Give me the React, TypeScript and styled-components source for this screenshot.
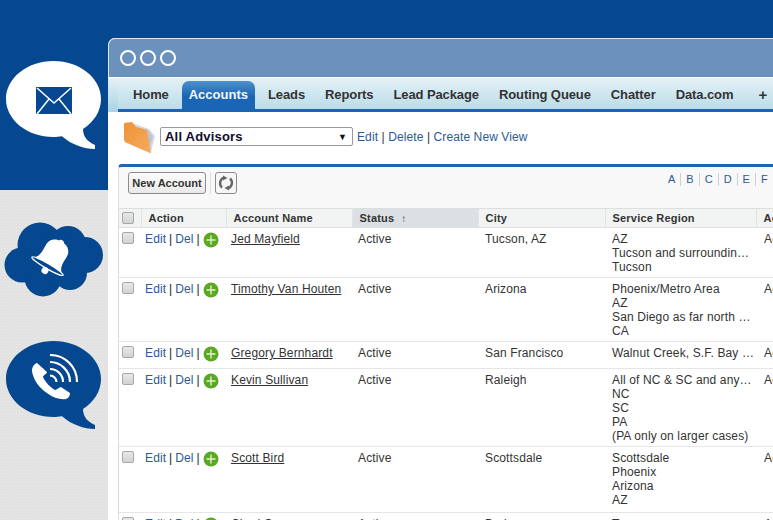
import React from "react";
import styled, { createGlobalStyle } from "styled-components";

const Global = createGlobalStyle`
  html, body { margin: 0; padding: 0; background: #05488f; }
  body { font-family: "Liberation Sans", Arial, sans-serif; font-size: 12px; color: #333; }
  * { box-sizing: border-box; }
`;

const Page = styled.div`
  width: 773px; height: 520px; overflow: hidden;
  display: grid; grid-template-columns: 108px 1fr;
  background: #05488f;
`;
const Side = styled.aside`display: flex; flex-direction: column; height: 520px;`;
const SideTop = styled.div`height: 190px; background: #05488f; padding: 61px 0 0 6px;`;
const SideBottom = styled.div`
  flex: 1; padding: 32px 0 0 4px;
  background-color: #e3e3e3;
  background-image:
    radial-gradient(rgba(255,255,255,.22) .6px, transparent .8px),
    radial-gradient(rgba(0,0,0,.02) .6px, transparent .8px);
  background-size: 3px 3px, 4px 4px;
  display: flex; flex-direction: column; gap: 44px;
`;
const SideIcon = styled.svg<{ $shift?: number }>`display: block; margin-left: ${p => p.$shift ?? 0}px;`;

const Main = styled.main`padding-top: 38px; min-width: 0;`;
const Win = styled.div`
  height: 482px; background: #fff; border-radius: 7px 0 0 0; overflow: hidden;
  display: flex; flex-direction: column;
`;
const TitleBar = styled.div`
  height: 39px; flex: none; background: #6b91bd;
  border-top: 1px solid #dfe8f2; border-left: 1px solid #dfe8f2; border-radius: 7px 0 0 0;
  display: flex; align-items: center; gap: 4px; padding: 0 0 0 11px;
`;
const Dot = styled.span`width: 16px; height: 16px; border-radius: 50%; border: 2px solid #fff;`;
const NavWrap = styled.div`
  flex: none; height: 34px; margin-top: 1px; padding: 2px 0 0 10px;
  background: linear-gradient(#e4f1f6, #a9d2e2);
`;
const Nav = styled.nav`
  height: 32px; display: flex; align-items: stretch; padding: 1px 0 0 5px;
  background: linear-gradient(#e2f0f5, #d2e8f0 40%, #bcdcea);
  border-bottom: 3px solid #1b66b4; border-radius: 7px 0 0 0;
  white-space: nowrap;
`;
const Tab = styled.a<{ $active?: boolean }>`
  flex: none; display: flex; align-items: center;
  padding: 0 ${p => (p.$active ? 7 : 10)}px 1px;
  margin: 0 ${p => (p.$active ? 3 : 0)}px;
  font-size: 13px; font-weight: bold; letter-spacing: ${p => (p.$active ? 0 : -0.1)}px;
  color: ${p => (p.$active ? "#f4f8fc" : "#333")};
  border-radius: 7px 7px 0 0;
  background: ${p => (p.$active ? "linear-gradient(#4f8fcb, #1b66b4 55%)" : "transparent")};
`;
const PlusTab = styled(Tab)`margin-left: 5px; font-size: 15px;`;
const Body = styled.div`flex: 1; padding-left: 10px; min-height: 0; background: #fff;`;
const Views = styled.div`height: 52px; display: flex; align-items: center; gap: 5px; padding: 0 0 3px 5px;`;
const Folder = styled.svg`flex: none; margin-top: 2px;`;
const Select = styled.div`
  width: 193px; height: 19px; border: 1px solid #9a9a9a; border-radius: 2px;
  display: flex; align-items: center; justify-content: space-between;
  padding: 0 5px 0 4px; font-size: 13px; font-weight: bold; color: #120c2c; letter-spacing: .2px;
`;
const Arrow = styled.span`font-size: 9px; color: #111;`;
const LinkRow = styled.div`font-size: 12px; color: #333; margin-left: -1px; letter-spacing: .1px;`;
const Lnk = styled.a`color: #2c5a94;`;

const Panel = styled.section`
  border-top: 3px solid #1b66b4; border-left: 1px solid #dcdcdc; border-radius: 4px 0 0 0;
  background: #f8f8f8; height: 400px; overflow: hidden;
`;
const Toolbar = styled.div`
  height: 41px; display: flex; align-items: flex-start; padding: 5px 0 0 9px; position: relative;
`;
const Btn = styled.button`
  width: 78px; height: 22px; padding: 0; background: linear-gradient(#fbfbfb, #eaeaea);
  border: 1px solid #8c8c8c; border-radius: 3px;
  font: bold 11px "Liberation Sans", Arial, sans-serif; color: #333;
`;
const Sep = styled.span`width: 1px; height: 22px; background: #dcdcdc; margin: 0 4px;`;
const IconBtn = styled.button`
  width: 22px; height: 22px; padding: 0; background: #f6f6f6;
  border: 1px solid #8c8c8c; border-radius: 3px; display: flex; align-items: center; justify-content: center;
`;
const Alpha = styled.div`
  position: absolute; top: 6px; left: 549px; display: flex; font-size: 11px; white-space: nowrap; color: #2c5a94;
`;
const Letter = styled.span`
  padding: 0 5px; border-right: 1px solid #cfcfcf; line-height: 13px;
  &:first-child { padding-left: 0; }
`;

const Table = styled.table`
  table-layout: fixed; width: 660px; border-collapse: collapse; background: #fff; font-size: 12px;
`;
const Th = styled.th<{ $sorted?: boolean }>`
  height: 19px; padding: 0 0 1px 7px; text-align: left; font-size: 11px; font-weight: bold; color: #333; letter-spacing: .2px;
  background: ${p => (p.$sorted ? "#dbe0e4" : "#f2f3f3")};
  border-top: 1px solid #dedede; border-bottom: 1px solid #dedede; border-right: 1px solid #e2e2e2;
  white-space: nowrap; overflow: hidden;
`;
const CheckTh = styled(Th)`padding: 0;`;
const SortArrow = styled.span`font-size: 10px; margin-left: 7px; font-weight: bold;`;
const Tr = styled.tr<{ $h: number }>`height: ${p => p.$h}px;`;
const Td = styled.td<{ $pad?: number }>`
  padding: 4px 0 0 ${p => p.$pad ?? 5}px; vertical-align: top; line-height: 14px; color: #333; letter-spacing: .13px;
  border-bottom: 1px solid #e6e6e6; white-space: nowrap; overflow: hidden;
`;
const CheckTd = styled(Td)`padding: 4px 0 0 3px;`;
const Check = styled.span`
  display: block; width: 12px; height: 12px; border: 1px solid #a8a8a8; border-radius: 2px;
  background: linear-gradient(#e8e8e8, #d2d2d2);
`;
const HeadCheck = styled(Check)`margin-left: 3px;`;
const Act = styled.div`display: flex; align-items: flex-start; gap: 3px;`;
const ActLinks = styled.span`word-spacing: -.6px;`;
const Bar = styled.span`color: #222;`;
const Plus = styled.svg`display: block;`;
const Name = styled.a`color: #333; text-decoration: underline;`;
const Line = styled.div``;

const rows = [
  { h: 50, name: "Jed Mayfield", city: "Tucson, AZ", region: ["AZ", "Tucson and surroundin…", "Tucson"] },
  { h: 64, name: "Timothy Van Houten", city: "Arizona", region: ["Phoenix/Metro Area", "AZ", "San Diego as far north …", "CA"] },
  { h: 27, name: "Gregory Bernhardt", city: "San Francisco", region: ["Walnut Creek, S.F. Bay …"] },
  { h: 78, name: "Kevin Sullivan", city: "Raleigh", region: ["All of NC & SC and any…", "NC", "SC", "PA", "(PA only on larger cases)"] },
  { h: 66, name: "Scott Bird", city: "Scottsdale", region: ["Scottsdale", "Phoenix", "Arizona", "AZ"] },
  { h: 27, name: "Chad Owen", city: "Buda", region: ["Texas"] },
];
const tabs: [string, boolean?][] = [
  ["Home"], ["Accounts", true], ["Leads"], ["Reports"], ["Lead Package"],
  ["Routing Queue"], ["Chatter"], ["Data.com"],
];

const blue = "#05488f";
const bubble = "M47.5 0C73.7 0 95 17 95 38C95 50 88 61 77 68C77 76 82 81 89 84L89 88C78 88 66 84 56 75.3C53 75.8 50 76 47.5 76C21.3 76 0 59 0 38C0 17 21.3 0 47.5 0Z";

export default function App() {
  return (
    <Page>
      <Global />
      <Side>
        <SideTop>
          <SideIcon width="95" height="89" viewBox="0 0 95 89">
            <path d={bubble} fill="#fff" />
            <rect x="30" y="26" width="36" height="27" fill={blue} />
            <path d="M31 27L48 42L65 27M31 53L43 38M65 53L53 38" stroke="#fff" strokeWidth="1.5" fill="none" />
          </SideIcon>
        </SideTop>
        <SideBottom>
          <SideIcon width="99" height="75" viewBox="0 0 99 75">
            <g fill={blue}>
              <circle cx="36" cy="23" r="22.5" /><circle cx="64" cy="22" r="18" /><circle cx="81" cy="33" r="18" />
              <circle cx="18" cy="43" r="17.5" /><circle cx="39" cy="56" r="18.5" /><circle cx="66" cy="51" r="17" />
              <circle cx="50" cy="38" r="26" />
            </g>
            <g transform="translate(50.5 32) rotate(30)">
              <path d="M-15 12C-11 8-12 2-12-4C-12-11-6-14-3-14C-2-16.500 2-16.500 3-14C6-14 12-11 12-4C12 2 11 8 15 12Z" fill="#fff" />
              <ellipse cx="0" cy="14" rx="18" ry="2.600" fill={blue} stroke="#fff" strokeWidth="1.300" />
              <circle cx="0" cy="19" r="3.500" fill="#fff" />
            </g>
          </SideIcon>
          <SideIcon $shift={2} width="95" height="89" viewBox="0 0 95 89">
            <path d={bubble} fill={blue} />
            <path d="M31 22C28 23 26 26 26 30C27 38 33 47 41 52C47 57 55 59 60 58C63 57 64 54 64 52L55 46C53 46 51 49 49 49C45 47 39 41 37 36C37 34 41 33 41 31Z" fill="#fff" />
            <g fill="none" stroke="#fff" strokeWidth="2.200">
              <path d="M44 14A26.700 26.700 0 0 1 71 41" />
              <path d="M44 21A20 20 0 0 1 64 41" />
              <path d="M44 28A13 13 0 0 1 57 41" />
              <path d="M44 34.500A6.500 6.500 0 0 1 50.500 41" />
            </g>
          </SideIcon>
        </SideBottom>
      </Side>
      <Main>
        <Win>
          <TitleBar><Dot /><Dot /><Dot /></TitleBar>
          <NavWrap>
            <Nav>
              {tabs.map(([t, a]) => <Tab key={t} $active={a}>{t}</Tab>)}
              <PlusTab>+</PlusTab>
            </Nav>
          </NavWrap>
          <Body>
            <Views>
              <Folder width="32" height="32" viewBox="0 0 32 32">
                <defs>
                  <linearGradient id="fold" x1="0" y1="0" x2="1" y2="1">
                    <stop offset="0" stopColor="#ee9336" /><stop offset="1" stopColor="#f5ab5f" />
                  </linearGradient>
                </defs>
                <path d="M9 1L26 7L32 14L28 30L20 26Z" fill="#d7d9de" />
                <path d="M10 4L25 8L30 15L26 27Z" fill="#b9c4d8" />
                <path d="M1 1L9 0L13 5L24 8L28 31Q28 31 27 31L4 21Q1 20 1 17Z" fill="url(#fold)" />
              </Folder>
              <Select>All Advisors<Arrow>▼</Arrow></Select>
              <LinkRow><Lnk>Edit</Lnk> | <Lnk>Delete</Lnk> | <Lnk>Create New View</Lnk></LinkRow>
            </Views>
            <Panel>
              <Toolbar>
                <Btn>New Account</Btn><Sep />
                <IconBtn>
                  <svg width="16" height="16" viewBox="0 0 16 16" fill="none">
                    <path d="M4 12.500A6 6 0 0 1 6 2.500" stroke="#666" strokeWidth="2.400" />
                    <path d="M12 3.500A6 6 0 0 1 10 13.500" stroke="#666" strokeWidth="2.400" />
                    <path d="M5 0.500L9.500 3L5 5.500Z" fill="#666" />
                    <path d="M11 10.500L6.500 13L11 15.500Z" fill="#666" />
                  </svg>
                </IconBtn>
                <Alpha>{["A", "B", "C", "D", "E", "F"].map(l => <Letter key={l}>{l}</Letter>)}</Alpha>
              </Toolbar>
              <Table>
                <colgroup>
                  <col width="22" /><col width="85" /><col width="126" /><col width="126" /><col width="127" /><col width="151" /><col width="100" />
                </colgroup>
                <thead>
                  <tr>
                    <CheckTh><HeadCheck /></CheckTh>
                    <Th>Action</Th>
                    <Th>Account Name</Th>
                    <Th $sorted>Status<SortArrow>↑</SortArrow></Th>
                    <Th>City</Th>
                    <Th>Service Region</Th>
                    <Th>Active</Th>
                  </tr>
                </thead>
                <tbody>
                  {rows.map(r => (
                    <Tr key={r.name} $h={r.h}>
                      <CheckTd><Check /></CheckTd>
                      <Td $pad={4}>
                        <Act>
                          <ActLinks><Lnk>Edit</Lnk> <Bar>|</Bar> <Lnk>Del</Lnk> <Bar>|</Bar></ActLinks>
                          <Plus width="16" height="16" viewBox="0 0 16 16">
                            <circle cx="8" cy="8" r="7.500" fill="#5ba823" />
                            <path d="M8 3.500V12.500M3.500 8H12.500" stroke="#dff3c8" strokeWidth="1.400" />
                          </Plus>
                        </Act>
                      </Td>
                      <Td><Name>{r.name}</Name></Td>
                      <Td $pad={6}>Active</Td>
                      <Td $pad={7}>{r.city}</Td>
                      <Td $pad={7}>{r.region.map((l, i) => <Line key={i}>{l}</Line>)}</Td>
                      <Td $pad={8}>Active</Td>
                    </Tr>
                  ))}
                </tbody>
              </Table>
            </Panel>
          </Body>
        </Win>
      </Main>
    </Page>
  );
}
